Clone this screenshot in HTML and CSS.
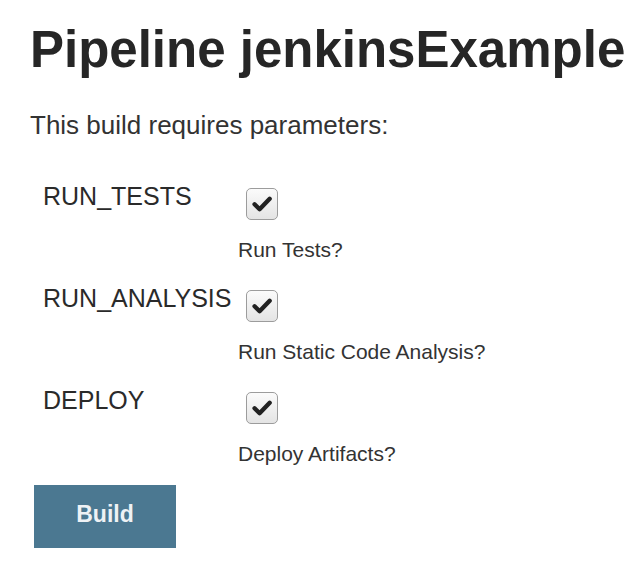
FILE: index.html
```html
<!DOCTYPE html>
<html>
<head>
<meta charset="utf-8">
<link rel="stylesheet" href="styles.css">
</head>
<body>
<main class="page">
  <h1 class="title">Pipeline jenkinsExample</h1>
  <p class="intro">This build requires parameters:</p>
  <div class="params">
    <div class="param">
      <div class="name">RUN_TESTS</div>
      <div class="value">
        <span class="check"><svg viewBox="0 0 20 20"><path d="M3.8 10.2 L8 14.4 L16.4 5.6" fill="none" stroke="#222" stroke-width="3.6" stroke-linecap="round" stroke-linejoin="round"/></svg></span>
        <div class="desc">Run Tests?</div>
      </div>
    </div>
    <div class="param">
      <div class="name">RUN_ANALYSIS</div>
      <div class="value">
        <span class="check"><svg viewBox="0 0 20 20"><path d="M3.8 10.2 L8 14.4 L16.4 5.6" fill="none" stroke="#222" stroke-width="3.6" stroke-linecap="round" stroke-linejoin="round"/></svg></span>
        <div class="desc">Run Static Code Analysis?</div>
      </div>
    </div>
    <div class="param">
      <div class="name">DEPLOY</div>
      <div class="value">
        <span class="check"><svg viewBox="0 0 20 20"><path d="M3.8 10.2 L8 14.4 L16.4 5.6" fill="none" stroke="#222" stroke-width="3.6" stroke-linecap="round" stroke-linejoin="round"/></svg></span>
        <div class="desc">Deploy Artifacts?</div>
      </div>
    </div>
  </div>
  <button class="build">Build</button>
</main>
</body>
</html>
```
FILE: styles.css
```css
html, body {
  margin: 0;
  padding: 0;
  background: #fff;
}
body {
  font-family: "Liberation Sans", Arial, sans-serif;
  color: #333;
}
.page {
  padding: 20px 0 0 30px;
}
.title {
  margin: 0;
  font-size: 51px;
  font-weight: bold;
  line-height: 60px;
  color: #262626;
}
.intro {
  margin: 30px 0 0 0;
  font-size: 26px;
  line-height: 30px;
  color: #333;
}
.params {
  margin-top: 41px;
  padding-left: 13px;
  display: flex;
  flex-direction: column;
}
.param {
  display: flex;
  height: 102px;
}
.name {
  width: 195px;
  font-size: 25px;
  line-height: 30px;
  color: #2a2a2a;
}
.value {
  display: flex;
  flex-direction: column;
  align-items: flex-start;
}
.check {
  margin: 7px 0 0 8px;
  width: 32px;
  height: 32px;
  box-sizing: border-box;
  border: 1.5px solid #9c9c9c;
  border-radius: 5px;
  background: linear-gradient(#fbfbfb, #e4e4e4);
  display: flex;
  align-items: center;
  justify-content: center;
}
.check svg {
  width: 24px;
  height: 24px;
}
.desc {
  margin-top: 18px;
  font-size: 21px;
  line-height: 24px;
  color: #333;
}
.build {
  display: block;
  margin-top: -2px;
  margin-left: 4px;
  width: 142px;
  height: 63px;
  border: none;
  background: #4b7891;
  color: #eef2f5;
  font-family: "Liberation Sans", Arial, sans-serif;
  font-weight: bold;
  font-size: 23px;
  padding: 0 0 4px 0;
}
```
